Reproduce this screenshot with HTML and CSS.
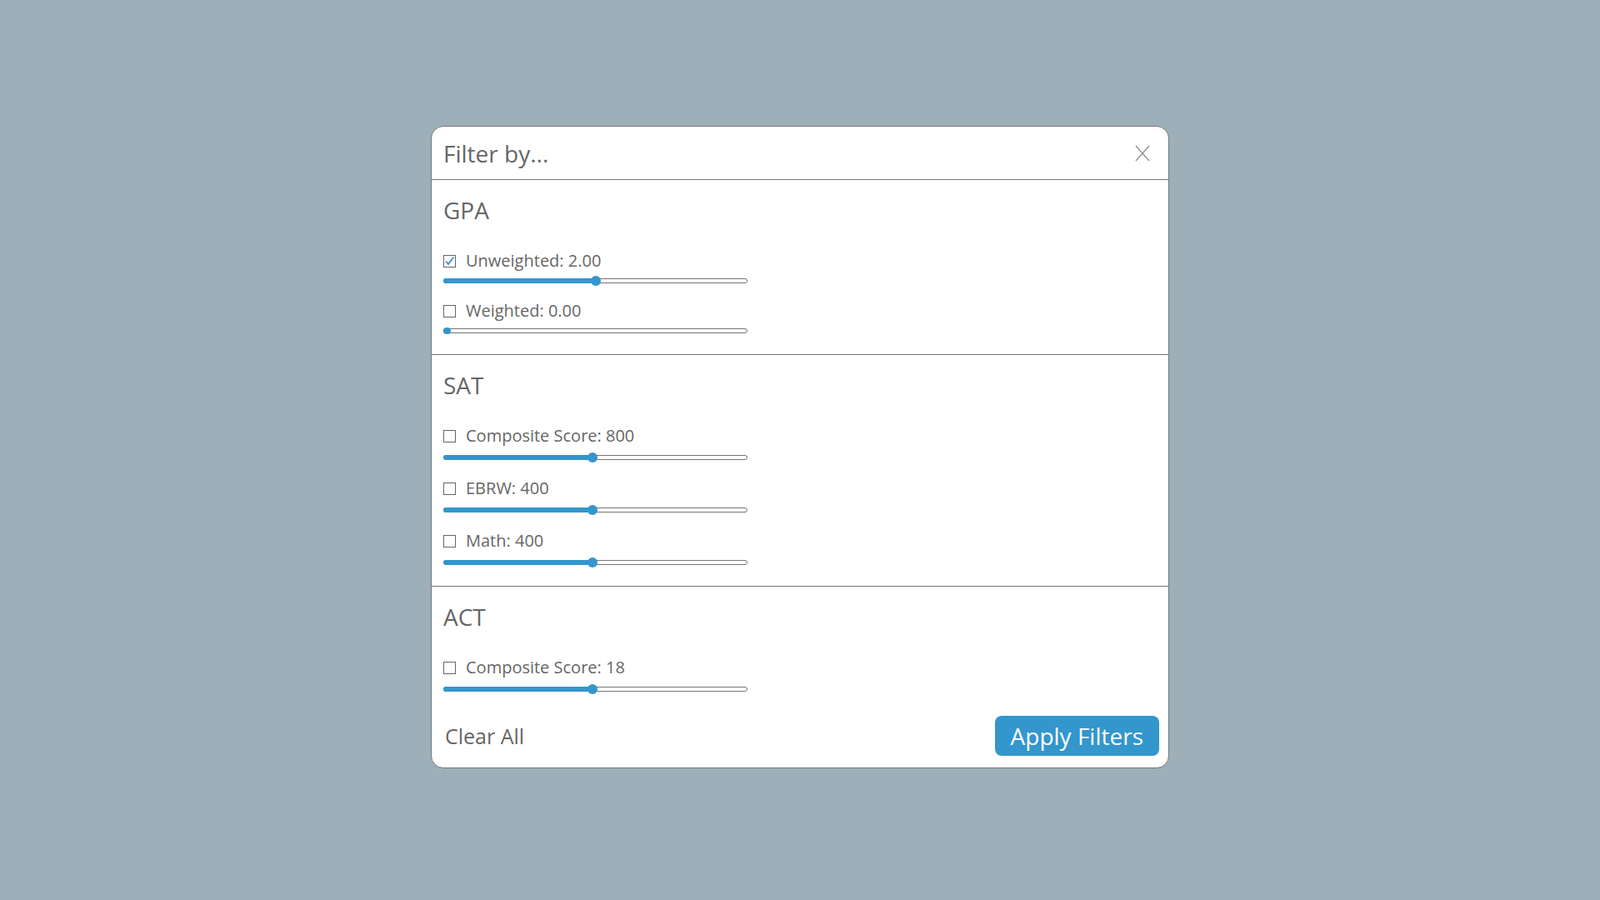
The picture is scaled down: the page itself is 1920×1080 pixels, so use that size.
FILE: index.html
```html
<!DOCTYPE html>
<html lang="en">
<head>
    <meta charset="UTF-8">
    <meta name="viewport" content="width=device-width, initial-scale=1.0">
    <title>Filter by...</title>
    <link rel="stylesheet" href="styles.css">
</head>
<body>
    <div class="modal">
        <div class="modal-header">
            <h1 class="modal-title">Filter by...</h1>
            <button class="close-btn" aria-label="Close">
                <svg width="18" height="20" viewBox="0 0 18 20"><path d="M1 1 L17 19 M17 1 L1 19" stroke="#8a8a8a" stroke-width="1.2" fill="none"/></svg>
            </button>
        </div>

        <div class="section gpa">
            <h2>GPA</h2>
            <div class="filter">
                <label class="filter-label">
                    <span class="check checked">
                        <svg width="13" height="13" viewBox="0 0 13 13"><path d="M2 6.5 L5 10 L11.5 1.5" stroke="#3396cc" stroke-width="1.8" fill="none"/></svg>
                    </span>
                    Unweighted: 2.00
                </label>
                <div class="slider" style="--v: 0.5"><div class="slider-fill"></div><div class="slider-thumb"></div></div>
            </div>
            <div class="filter">
                <label class="filter-label"><span class="check"></span>Weighted: 0.00</label>
                <div class="slider at-min" style="--v: 0"><div class="slider-fill"></div><div class="slider-thumb"></div></div>
            </div>
        </div>

        <div class="section">
            <h2>SAT</h2>
            <div class="filter">
                <label class="filter-label"><span class="check"></span>Composite Score: 800</label>
                <div class="slider" style="--v: 0.49"><div class="slider-fill"></div><div class="slider-thumb"></div></div>
            </div>
            <div class="filter">
                <label class="filter-label"><span class="check"></span>EBRW: 400</label>
                <div class="slider" style="--v: 0.49"><div class="slider-fill"></div><div class="slider-thumb"></div></div>
            </div>
            <div class="filter">
                <label class="filter-label"><span class="check"></span>Math: 400</label>
                <div class="slider" style="--v: 0.49"><div class="slider-fill"></div><div class="slider-thumb"></div></div>
            </div>
        </div>

        <div class="section last">
            <h2>ACT</h2>
            <div class="filter">
                <label class="filter-label"><span class="check"></span>Composite Score: 18</label>
                <div class="slider" style="--v: 0.49"><div class="slider-fill"></div><div class="slider-thumb"></div></div>
            </div>
        </div>

        <div class="modal-footer">
            <button class="clear-btn">Clear All</button>
            <button class="apply-btn">Apply Filters</button>
        </div>
    </div>
</body>
</html>
```

FILE: styles.css
```css
body {
    font-family: "Open Sans", "Noto Sans", sans-serif;
    background: #9db0b9;
    margin: 0;
    min-height: 100vh;
    display: flex;
    justify-content: center;
    align-items: flex-start;
    padding-top: 151px;
    box-sizing: border-box;
    color: #666;
}

.modal {
    width: 886px;
    box-sizing: border-box;
    background: #fff;
    border: 1px solid #757575;
    border-radius: 15px;
    overflow: hidden;
}

.modal-header {
    display: flex;
    justify-content: space-between;
    align-items: center;
    padding: 13px 14px 12px;
    border-bottom: 1px solid #757575;
}

.modal-title {
    margin: 0;
    font-size: 28px;
    line-height: 38px;
    font-weight: 400;
    color: #666;
}

.close-btn {
    background: none;
    border: none;
    padding: 0;
    margin-right: 8px;
    display: flex;
    cursor: pointer;
}

.section {
    padding: 17px 14px 22px;
    border-bottom: 1px solid #757575;
}

.section.last {
    border-bottom: none;
    padding-bottom: 0;
}

.section h2 {
    margin: 0 0 28px;
    font-size: 28px;
    line-height: 38px;
    font-weight: 400;
    color: #666;
}

.filter + .filter {
    margin-top: 17px;
}

.gpa .filter + .filter {
    margin-top: 16px;
}

.filter-label {
    display: flex;
    align-items: center;
    font-size: 20px;
    line-height: 27px;
    color: #666;
}

.check {
    width: 13px;
    height: 13px;
    border: 1px solid #666;
    margin: 2px 12px 0 0;
    display: flex;
    align-items: center;
    justify-content: center;
    flex-shrink: 0;
}

.slider {
    position: relative;
    width: 365px;
    height: 12px;
    margin-top: 7px;
}

.gpa .slider {
    margin-top: 5px;
}

.slider::before {
    content: "";
    position: absolute;
    left: 0;
    right: 0;
    top: 3px;
    height: 6px;
    box-sizing: border-box;
    border: 1px solid #757575;
    border-radius: 3px;
    background: #fff;
}

.slider-fill {
    position: absolute;
    left: 0;
    top: 3px;
    height: 6px;
    width: calc(5px + var(--v) * (100% - 10px));
    background: #3396cc;
    border-radius: 3px;
}

.slider-thumb {
    position: absolute;
    top: 0;
    left: calc(5px + var(--v) * (100% - 10px));
    width: 12px;
    height: 12px;
    margin-left: -6px;
    border-radius: 50%;
    background: #3396cc;
}

.slider.at-min .slider-thumb {
    top: 2px;
    width: 9px;
    height: 8px;
    margin-left: -5px;
    border-radius: 4px;
}

.modal-footer {
    display: flex;
    justify-content: space-between;
    align-items: center;
    padding: 26px 11px 14px 16px;
}

.clear-btn {
    background: none;
    border: none;
    padding: 0;
    font-family: inherit;
    font-size: 25px;
    line-height: 34px;
    color: #666;
    cursor: pointer;
}

.apply-btn {
    height: 48px;
    padding: 0 19px;
    border: none;
    border-radius: 8px;
    background: #3396cc;
    color: #fff;
    font-family: inherit;
    font-size: 28px;
    cursor: pointer;
}
```
